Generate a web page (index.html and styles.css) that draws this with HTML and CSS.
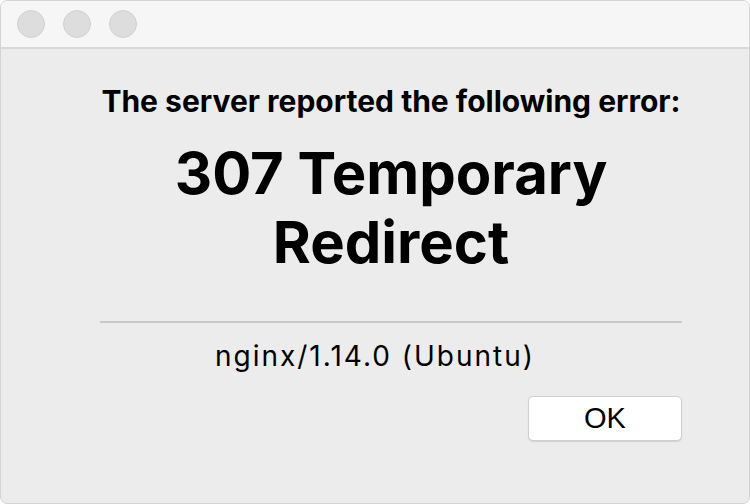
FILE: index.html
```html
<!DOCTYPE html>
<html>
<head>
<meta charset="utf-8">
<link rel="stylesheet" href="styles.css">
</head>
<body>
<div class="window">
  <div class="titlebar">
    <span class="light"></span>
    <span class="light"></span>
    <span class="light"></span>
  </div>
  <div class="content">
    <div class="column">
      <p class="lead">The server reported the following error:</p>
      <h1 class="code">307 Temporary<br>Redirect</h1>
      <hr class="divider">
      <p class="server">nginx/1.14.0 (Ubuntu)</p>
      <div class="actions">
        <button class="ok">OK</button>
      </div>
    </div>
  </div>
</div>
</body>
</html>
```
FILE: styles.css
```css
html, body {
  margin: 0;
  padding: 0;
  background: #ffffff;
}
body {
  width: 750px;
  height: 504px;
  font-family: Inter, Roboto, "Liberation Sans", sans-serif;
  color: #000;
}
.window {
  width: 750px;
  height: 504px;
  box-sizing: border-box;
  border-radius: 7px;
  overflow: hidden;
  background: #ececec;
  display: flex;
  flex-direction: column;
  border: 1px solid #d4d4d4;
}
.titlebar {
  height: 46px;
  background: #f6f6f6;
  border-bottom: 2px solid #d8d8d8;
  display: flex;
  align-items: center;
  gap: 18px;
  padding-left: 16px;
  box-sizing: content-box;
}
.light {
  width: 28px;
  height: 28px;
  border-radius: 50%;
  background: #dddddd;
  border: 1px solid #d1d1d1;
  box-sizing: border-box;
}
.content {
  flex: 1;
  display: flex;
  padding: 0 67px 0 99px;
}
.column {
  flex: 1;
  display: flex;
  flex-direction: column;
  align-items: center;
}
.lead {
  margin: 34px 0 0;
  font-size: 30px;
  font-weight: 700;
  line-height: 36px;
  white-space: nowrap;
}
.code {
  margin: 20px 0 0;
  font-size: 58px;
  font-weight: 700;
  line-height: 69px;
  text-align: center;
}
.divider {
  align-self: stretch;
  border: 0;
  height: 2px;
  background: #c9c9c9;
  margin: 44px 0 0;
}
.server {
  margin: 16px 32px 0 0;
  font-size: 28px;
  letter-spacing: 2px;
  line-height: 34px;
  white-space: nowrap;
}
.actions {
  align-self: stretch;
  display: flex;
  justify-content: flex-end;
  margin-top: 23px;
}
.ok {
  width: 154px;
  height: 45px;
  background: #ffffff;
  border: 1px solid #cfcfcf;
  border-radius: 5px;
  box-shadow: 0 1px 1px rgba(0,0,0,0.12);
  font-family: "Liberation Sans", Arial, sans-serif;
  font-size: 29px;
  color: #000;
  padding: 0;
}
```
